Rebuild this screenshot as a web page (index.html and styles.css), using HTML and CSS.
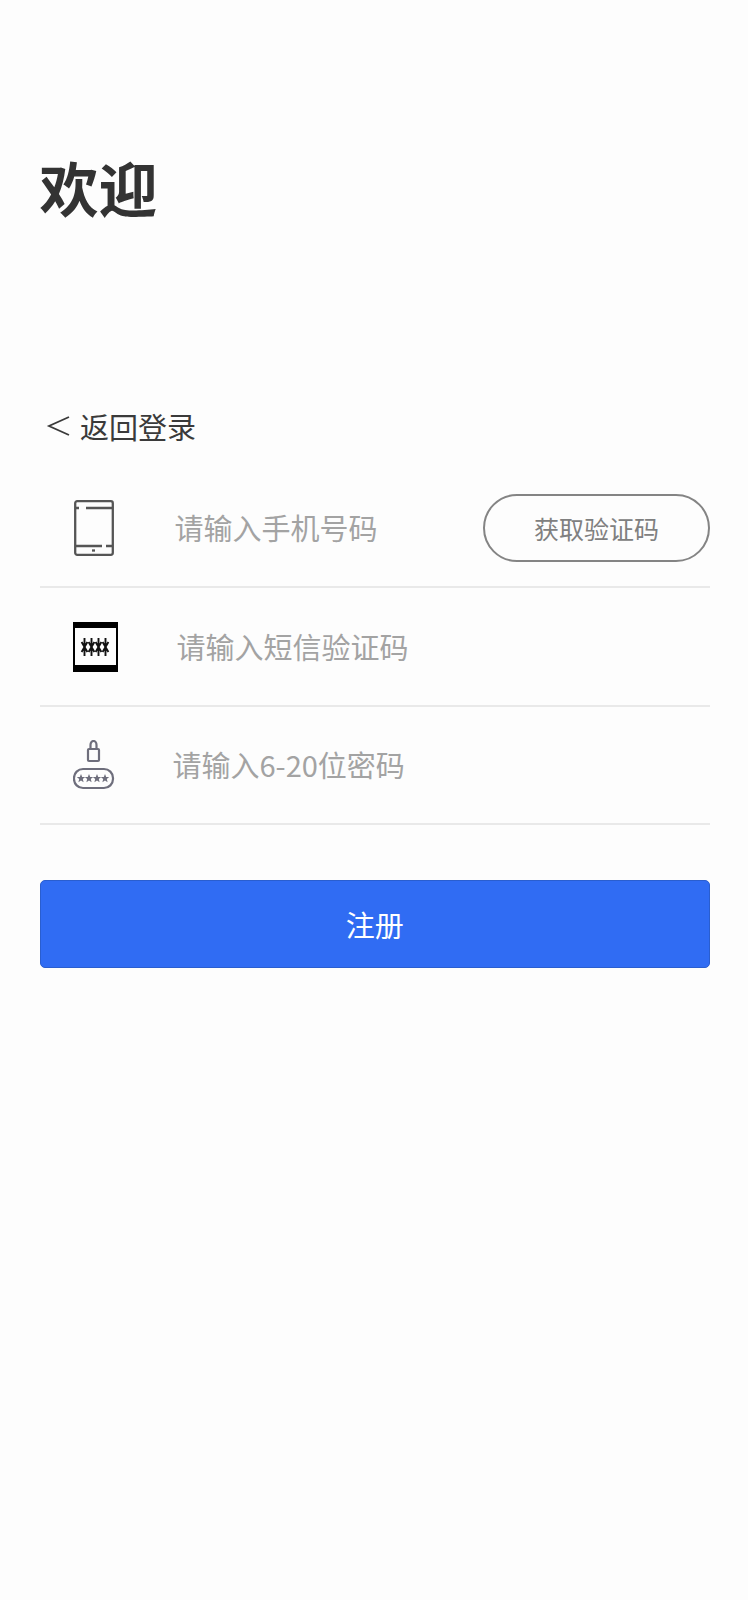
FILE: index.html
```html
<!DOCTYPE html>
<html lang="zh-CN">
<head>
    <meta charset="UTF-8">
    <meta name="viewport" content="width=device-width, initial-scale=1.0">
    <title>注册</title>
    <link rel="stylesheet" href="styles.css">
</head>
<body>

    <div class="container">
        <h1 class="title">欢迎</h1>

        <div class="back">
            <svg class="back-arrow" width="24" height="24" viewBox="0 0 24 24"><path d="M23 3 L3 12 L23 21" fill="none" stroke="#3a3a3a" stroke-width="1.800"/></svg>
            <span>返回登录</span>
        </div>

        <div class="row">
            <div class="row-icon">
                <svg width="40" height="56" viewBox="0 0 40 56" fill="none" stroke="#555" stroke-width="2.300">
                    <rect x="1.200" y="1.200" width="37.600" height="53.600" rx="2"/>
                    <path d="M1 8 H5 M12 8 H39 M1 46 H28 M32 46 H39"/>
                    <path d="M18 50.500 H21"/>
                </svg>
            </div>
            <span class="placeholder ph-phone">请输入手机号码</span>
            <button class="code-btn">获取验证码</button>
        </div>

        <div class="row">
            <div class="row-icon">
                <svg class="sms-icon" width="46" height="50" viewBox="0 0 46 50">
                    <rect x="1" y="0" width="45" height="50" fill="#000"/>
                    <rect x="3" y="6" width="41" height="37" fill="#fdfdfd"/>
                    <g stroke="#111" stroke-width="1.900">
                        <path d="M12.500 16 V34 M9.600 20 L15.400 30 M15.400 20 L9.600 30"/>
                        <path d="M19.500 16 V34 M16.600 20 L22.400 30 M22.400 20 L16.600 30"/>
                        <path d="M26.500 16 V34 M23.600 20 L29.400 30 M29.400 20 L23.600 30"/>
                        <path d="M33.500 16 V34 M30.600 20 L36.400 30 M36.400 20 L30.600 30"/>
                    </g>
                </svg>
            </div>
            <span class="placeholder ph-sms">请输入短信验证码</span>
        </div>

        <div class="row">
            <div class="row-icon">
                <svg class="lock-icon" width="42" height="50" viewBox="0 0 42 50" fill="none" stroke="#6e6e7c" stroke-width="2.200">
                    <rect x="15" y="9" width="11" height="12" rx="1"/>
                    <path d="M17.500 9 V5 a3 4 0 0 1 6 0 V9"/>
                    <rect x="1" y="29" width="39" height="19" rx="9"/>
                    <g fill="#6e6e7c" stroke="none">
                        <path d="M8 34 L9.200 37 L12.200 37 L9.800 39 L10.600 42.200 L8 40.400 L5.400 42.200 L6.200 39 L3.800 37 L6.800 37 Z"/>
                        <path d="M16 34 L17.200 37 L20.200 37 L17.800 39 L18.600 42.200 L16 40.400 L13.400 42.200 L14.200 39 L11.800 37 L14.800 37 Z"/>
                        <path d="M24 34 L25.200 37 L28.200 37 L25.800 39 L26.600 42.200 L24 40.400 L21.400 42.200 L22.200 39 L19.800 37 L22.800 37 Z"/>
                        <path d="M32 34 L33.200 37 L36.200 37 L33.800 39 L34.600 42.200 L32 40.400 L29.400 42.200 L30.200 39 L27.800 37 L30.800 37 Z"/>
                    </g>
                </svg>
            </div>
            <span class="placeholder ph-pwd">请输入6-20位密码</span>
        </div>

        <button class="submit">注册</button>
    </div>

</body>
</html>
```

FILE: styles.css
```css
body {
    font-family: "Noto Sans CJK SC", "Noto Sans", sans-serif;
    background-color: #fdfdfd;
    margin: 0;
    padding: 0;
}
.container {
    padding: 145px 38px 0 39.500px;
}
.title {
    margin: 0;
    font-size: 59px;
    line-height: 84px;
    font-weight: 700;
    color: #333;
}
.back {
    display: flex;
    align-items: center;
    margin-top: 175px;
    margin-bottom: 22px;
    padding-left: 6.500px;
    height: 44px;
    font-size: 29px;
    color: #3a3a3a;
}
.back-arrow {
    margin-right: 10px;
}
.row {
    display: flex;
    align-items: center;
    height: 116.400px;
    border-bottom: 2px solid #e9e9e9;
}
.row-icon {
    width: 100px;
    display: flex;
    justify-content: center;
    padding-left: 9px;
    box-sizing: border-box;
}
.sms-icon {
    margin-left: 1px;
}
.lock-icon {
    margin-left: -1px;
}
.placeholder {
    font-size: 29px;
    color: #a3a3a3;
    padding-bottom: 2px;
}
.ph-phone {
    margin-left: 35px;
}
.ph-sms {
    margin-left: 37px;
}
.ph-pwd {
    margin-left: 33px;
}
.code-btn {
    margin-left: auto;
    width: 227px;
    height: 68px;
    border: 2px solid #848484;
    border-radius: 34px;
    background: transparent;
    font-family: inherit;
    font-size: 25px;
    color: #808080;
    padding: 0;
}
.submit {
    display: block;
    width: 100%;
    height: 88px;
    margin-top: 55px;
    background: #306cf3;
    border: 1px solid #2a5ecf;
    border-radius: 5px;
    color: #fff;
    font-family: inherit;
    font-size: 29px;
    padding: 0;
}
```
